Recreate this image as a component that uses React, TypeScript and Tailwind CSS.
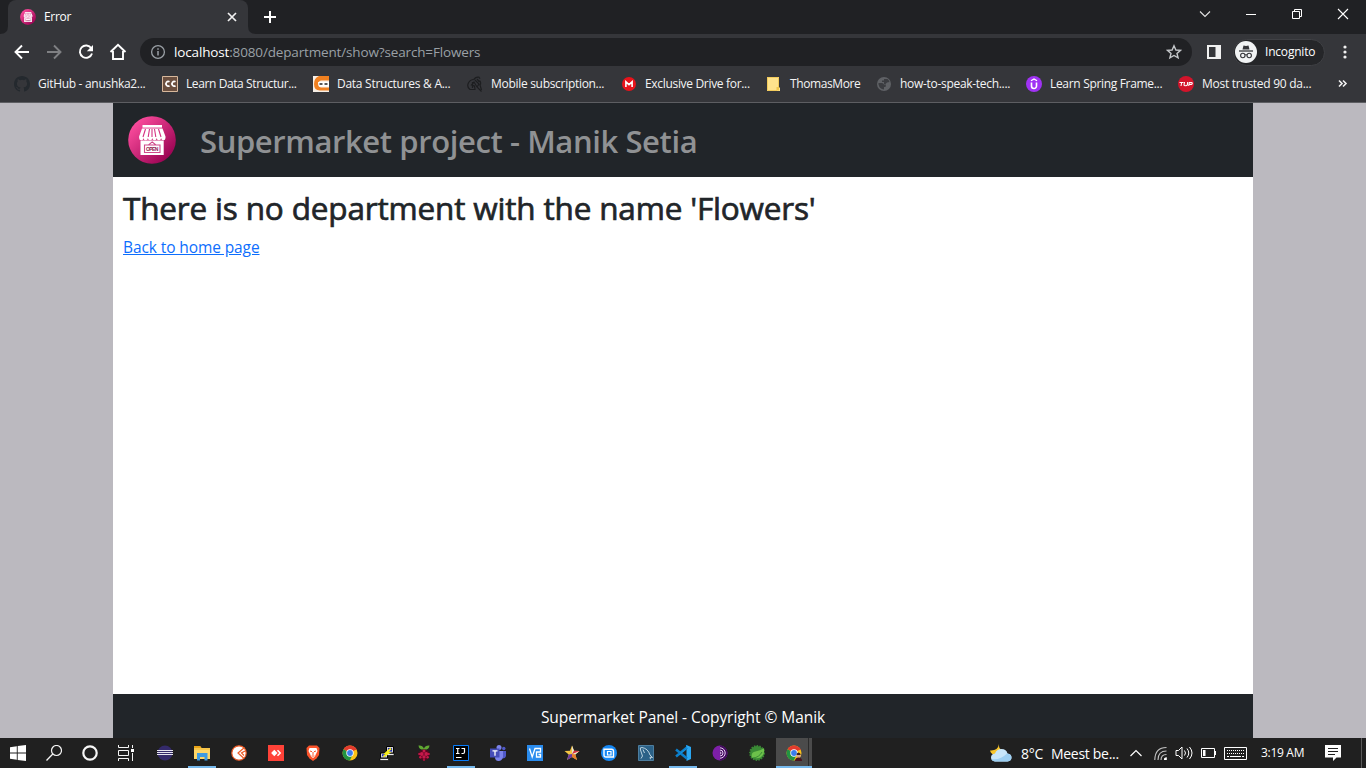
import React from "react";

const UI = "font-['Open_Sans','Noto_Sans',sans-serif]";

function StoreLogo({ className }: { className: string }) {
  return (
    <svg viewBox="0 0 48 48" className={className}>
      <defs>
        <linearGradient id="store" x1="0.1" y1="0.1" x2="0.9" y2="0.9">
          <stop offset="0" stopColor="#ff4fa0" />
          <stop offset="1" stopColor="#96004f" />
        </linearGradient>
      </defs>
      <circle cx="24" cy="24" r="23.8" fill="url(#store)" />
      <path d="M14.5 9h19.500v2.600h-19.500z" fill="#fff" />
      <path d="M14 12.500h20.500l3 8v1.500a2.200 2.200 0 0 1-4.400 0 2.200 2.200 0 0 1-4.400 0 2.200 2.200 0 0 1-4.400 0 2.200 2.200 0 0 1-4.400 0 2.200 2.200 0 0 1-4.400 0 2.200 2.200 0 0 1-4.400 0v-1.500z" fill="#fff" />
      <path d="M17.500 13l-2.500 8M21.500 13l-1.300 8M26.500 13l1.300 8M30.500 13l2.500 8M24 13v8" stroke="#d43283" strokeWidth="1.100" />
      <path d="M12.500 24.500h23.200v14.500h-23.200z" fill="#fff" />
      <path d="M20.500 29l3.700-3.100 3.700 3.100M16.500 29h15.500v7.500h-15.500z" fill="none" stroke="#d04a8c" strokeWidth="1.100" />
      <text x="24.200" y="34.800" fontSize="5" fontWeight="700" textAnchor="middle" fill="#8d174f" fontFamily="Liberation Sans" textLength="12.500">OPEN</text>
    </svg>
  );
}

function S({ children, w = 16, h = 16, className = "" }: { children: React.ReactNode; w?: number; h?: number; className?: string }) {
  return (
    <svg width={w} height={h} viewBox={`0 0 ${w} ${h}`} fill="none" className={`shrink-0 ${className}`}>
      {children}
    </svg>
  );
}

const bookmarks: { label: string; cls: string; icon: React.ReactNode }[] = [
  {
    label: "GitHub - anushka2...",
    cls: "w-[108px] tracking-[-0.3px]",
    icon: <path fill="#24292e" d="M8 0C3.580 0 0 3.580 0 8c0 3.540 2.290 6.530 5.470 7.590.4.070.55-.17.55-.38 0-.19-.01-.82-.01-1.490-2.010.37-2.530-.49-2.690-.94-.09-.23-.48-.94-.82-1.130-.28-.15-.68-.52-.01-.53.63-.01 1.080.58 1.230.82.72 1.210 1.870.87 2.330.66.07-.52.28-.87.51-1.070-1.780-.2-3.640-.89-3.640-3.950 0-.87.31-1.590.82-2.150-.08-.2-.36-1.020.08-2.120 0 0 .67-.21 2.200.82a7.600 7.600 0 0 1 4 0c1.530-1.040 2.200-.82 2.200-.82.44 1.100.16 1.920.08 2.120.51.56.82 1.270.82 2.150 0 3.070-1.870 3.750-3.650 3.950.29.25.54.73.54 1.480 0 1.070-.01 1.930-.01 2.200 0 .21.15.46.55.38A8.010 8.010 0 0 0 16 8c0-4.420-3.580-8-8-8z" />,
  },
  {
    label: "Learn Data Structur...",
    cls: "w-[111px] tracking-[-0.4px]",
    icon: (
      <>
        <path d="M.5.5h15v15H.5z" fill="#6b4f3f" stroke="#d8b89c" />
        <path d="M7.500 5.800A2.300 2.300 0 1 0 7.500 9.700M13.500 5.800A2.300 2.300 0 1 0 13.500 9.700" stroke="#fff" strokeWidth="1.800" />
      </>
    ),
  },
  {
    label: "Data Structures & A...",
    cls: "w-[114px] tracking-[-0.27px]",
    icon: (
      <>
        <path d="M0 0h16v16H0z" fill="#f7efe6" />
        <path d="M16 0v4.500H8Q5.200 5 5.200 8T8 11.500h8v3H7Q1 14.500 1 8q0-6 5-8z" fill="#f08020" />
        <path d="M5 6h11v4.500H6z" fill="#fff" />
        <path d="M6.500 8h3M11.500 8h3" stroke="#222" strokeWidth="1.500" />
      </>
    ),
  },
  {
    label: "Mobile subscription...",
    cls: "w-[114px] tracking-[-0.3px]",
    icon: (
      <path
        d="M6.500 4Q8.500.5 12 1.200l1 1.600M12.500 4.500q2 2 .5 4.500l1.500 5M6 3.500Q2 4.500 1 8t2 5.500h5l-.5-3.500L4.500 9l2.500-3 3 5 4.500 4.500M8 4l4 4-2 3M5.500 6v6M10 3l2.500 3"
        stroke="#1d1e20"
        strokeWidth="1.200"
      />
    ),
  },
  {
    label: "Exclusive Drive for...",
    cls: "w-[105px] tracking-[-0.32px]",
    icon: (
      <>
        <circle cx="8" cy="8" r="7" fill="#e8131b" />
        <path d="M4.900 11V5.800L8 8.700l3.100-2.900V11" stroke="#fff" strokeWidth="1.600" />
      </>
    ),
  },
  {
    label: "ThomasMore",
    cls: "w-[70px] tracking-[-0.4px]",
    icon: (
      <>
        <path d="M1 1h12v10.500h1V15H1z" fill="#ffe38c" />
        <path d="M1.500 1v13.500H11M1 1.500h11.500V11" stroke="#f2cb5c" />
        <path d="M10.500 11h2.500v3.500h-2.500z" fill="#f0c64b" />
      </>
    ),
  },
  {
    label: "how-to-speak-tech....",
    cls: "w-[110px] tracking-[-0.3px]",
    icon: (
      <>
        <circle cx="8" cy="8" r="7" fill="#5f6165" />
        <path d="M2.500 7H6q1.500 0 2 1.500h2l-.5 2.500H8v2.500Q3.500 13 2.500 8.500zM8 3h3.500q1.500 1 2 3L11 6.500 9.500 8H8V6H6V4.500h2z" fill="#3b3c40" />
      </>
    ),
  },
  {
    label: "Learn Spring Frame...",
    cls: "w-[112px] tracking-[-0.32px]",
    icon: (
      <>
        <circle cx="8" cy="8" r="8" fill="#a032f4" />
        <path d="M5.500 6.500v3.500a2.500 2.500 0 0 0 5 0V6.500" stroke="#fff" strokeWidth="1.600" />
        <path d="M5 4.800L8 3l3 1.800" stroke="#fff" strokeWidth="1.300" />
      </>
    ),
  },
  {
    label: "Most trusted 90 da...",
    cls: "w-[110px] tracking-[-0.28px]",
    icon: (
      <>
        <circle cx="8" cy="8" r="8" fill="#d3142b" />
        <path d="M1.500 6.500h4M3.700 6.500l-.7 3.500M6.500 6l-.5 3q0 .8 1.500.8t1.800-.8l.4-3M10.700 10l.6-3.500h2.200q1 0 .7 1t-1.200.9h-1.800" stroke="#fff" strokeWidth="1.100" />
      </>
    ),
  },
];

function ChromeMark() {
  return (
    <g>
      <circle cx="8" cy="8" r="7.500" fill="#fbc116" />
      <path d="M1.500 4.250A7.500 7.500 0 0 1 14.500 4.250L8 8z" fill="#e33b2e" />
      <path d="M1.500 4.250A7.500 7.500 0 0 0 7.800 15.500L10.500 10 8 8z" fill="#229342" />
      <path d="M8 4.300h6.600" stroke="#e33b2e" strokeWidth="1" />
      <circle cx="8" cy="8" r="3.700" fill="#fff" />
      <circle cx="8" cy="8" r="2.900" fill="#3b7ded" />
    </g>
  );
}

const apps: { name: string; open?: boolean; icon: React.ReactNode }[] = [
  {
    name: "eclipse",
    icon: (
      <>
        <circle cx="8" cy="8" r="7.500" fill="#342a6b" />
        <path d="M0 5.500h16M0 7.500h16M0 9.500h16" stroke="#e6e4ef" strokeWidth="1" />
      </>
    ),
  },
  {
    name: "explorer",
    open: true,
    icon: (
      <>
        <path d="M0 1h6l1.500 2H16v11H0z" fill="#f8c64a" />
        <path d="M0 1h6l1.500 2H0z" fill="#e8a317" />
        <path d="M0 5h16v9H0z" fill="#ffd766" />
        <path d="M3 15.500V8h10.500v7.500h-3V12H6v3.500z" fill="#3f9be0" />
      </>
    ),
  },
  {
    name: "postman",
    icon: (
      <>
        <circle cx="8" cy="8" r="7.200" fill="#fff" stroke="#ef5b25" strokeWidth="1.200" />
        <path d="M13.500 2.500L7 8l6 5.500M14 6l-3.500 2 2.500 2.500" stroke="#ef5b25" strokeWidth="1.200" />
      </>
    ),
  },
  {
    name: "anydesk",
    icon: (
      <>
        <path d="M0 0h16v16H0z" fill="#ff4238" />
        <path d="M6.300 4.800L9.500 8l-3.200 3.200L3.100 8z" fill="#fff" />
        <path d="M9.500 5.300L12.200 8l-2.700 2.700" stroke="#fff" strokeWidth="1.500" />
      </>
    ),
  },
  {
    name: "brave",
    icon: (
      <>
        <path d="M4 .5h8L14.500 3 14 10l-2.500 3.500L8 16l-3.500-2.500L2 10 1.500 3z" fill="#fb542b" />
        <path d="M4.500 3h7l1 3-2 4-.5 1.500L8 13l-2-1.500L5.500 10l-2-4z" fill="#fff" />
        <path d="M5 6l2 .7M11 6l-2 .7M8 7v3M6.500 11h3" stroke="#fb542b" />
      </>
    ),
  },
  { name: "chrome", icon: <ChromeMark /> },
  {
    name: "putty",
    icon: (
      <>
        <path d="M7.500 1.500h7v6.500h-7zM1.500 8h7v5h-7z" fill="#d4d4d4" stroke="#000" />
        <path d="M9 3h4v3.500H9zM3 9.300h4v2H3z" fill="#1b2bc0" />
        <path d="M7.500 8.500H15v2H9M1 13.500h8.500v2H1z" fill="#eee" stroke="#000" strokeWidth=".6" />
        <path d="M12 3.500L7 8h2.500L4.500 11.500" stroke="#f7ee1b" strokeWidth="1.900" />
      </>
    ),
  },
  {
    name: "raspberry",
    icon: (
      <>
        <path d="M2.500.5Q6.500 0 7.900 3.500 9.500 0 13.500.5 13 5 8 4.800 3 5 2.500.5z" fill="#5fa832" />
        <path d="M8 4.500q4 0 5.500 3.500.5 4-2.500 6.500-3 2-6 0Q2 12 2.500 8 4 4.500 8 4.500z" fill="#58061f" />
        <g fill="#c7194b">
          <circle cx="8" cy="6.100" r="1.500" />
          <circle cx="5.800" cy="9" r="1.900" />
          <circle cx="10.200" cy="9" r="1.900" />
          <circle cx="8" cy="12" r="1.700" />
          <circle cx="3.200" cy="9" r="1" />
          <circle cx="12.800" cy="9" r="1" />
          <circle cx="4.400" cy="12.300" r="1.200" />
          <circle cx="11.600" cy="12.300" r="1.200" />
          <circle cx="8" cy="14.900" r=".9" />
        </g>
      </>
    ),
  },
  {
    name: "intellij",
    open: true,
    icon: (
      <>
        <path d="M.5.5h15v15H.5z" fill="#000" stroke="#087cfa" />
        <path d="M3 3.500h3.500M4.750 3.500v5M3 8.500h3.500M8.500 3.500h3v3.500q0 1.500-1.500 1.500H8.500M3 12.500h5.500" stroke="#fff" strokeWidth="1.200" />
      </>
    ),
  },
  {
    name: "teams",
    icon: (
      <>
        <circle cx="9" cy="2.500" r="2.500" fill="#7b83eb" />
        <circle cx="13.800" cy="3.500" r="1.700" fill="#5059c9" />
        <path d="M11 6h5v5q-.5 2.500-4 2.500z" fill="#5059c9" />
        <path d="M5 6h8v6q-1 4-4.500 4T5 12z" fill="#7b83eb" />
        <path d="M0 3.500h9.500v9H0z" fill="#464eb8" />
        <path d="M2.500 5.800h5M5 5.800v5" stroke="#fff" strokeWidth="1.300" />
      </>
    ),
  },
  {
    name: "vnc",
    icon: (
      <>
        <path d="M0 0h16v16H0z" fill="#2a8cee" />
        <path d="M2.500 3.500l2.700 8.500L8 3.500h5.500v3.500h-4v5h4V9.500h-2" stroke="#fff" strokeWidth="1.300" />
      </>
    ),
  },
  {
    name: "star",
    icon: (
      <>
        <path d="M8 .5l2 5.200 5.500.3-4.200 3.600L13 15l-5-3-5 3 1.700-5.400L.5 6 6 5.700z" fill="#f4c542" />
        <path d="M8 .5l2 5.200L8 9zM15.500 6l-4.200 3.600L8 9z" fill="#e9e2d5" />
        <path d="M10 5.700l5.500.3L8 9z" fill="#d42d4c" />
        <path d="M3 15l1.700-5.400L8 9v3z" fill="#6a3ba5" />
        <path d="M13 15l-1.700-5.400L8 9v3z" fill="#e77e2d" />
      </>
    ),
  },
  {
    name: "remote",
    icon: (
      <>
        <circle cx="8" cy="8" r="8" fill="#1688f5" />
        <path d="M3 4.200h7.500q2 0 2 2V12H5q-2 0-2-2z" stroke="#fff" strokeWidth="1.400" />
        <path d="M6.500 6.500h3.500v3.500H6.500z" stroke="#fff" strokeWidth="1.200" />
      </>
    ),
  },
  {
    name: "mysql",
    icon: (
      <>
        <path d="M.5.5h15v15H.5z" fill="#2b6187" stroke="#4d7d9e" />
        <path d="M3 13.500L4.500 11 2.500 5Q1.500 2 4 2.500q6 1 8 7.500l2.500 2.500-2.500-.3.500 2M5 4.500l1.500 3.500" stroke="#c8dce8" strokeWidth=".9" />
      </>
    ),
  },
  {
    name: "vscode",
    open: true,
    icon: (
      <>
        <path d="M11.500 0L16 2v12l-4.500 2z" fill="#2aa7f2" />
        <path d="M12 2.500L1 11.500M1 4.500l11 9" stroke="#0c7fcb" strokeWidth="2.600" />
        <path d="M11.500 0v3.500L4 9.500" stroke="#1590dc" strokeWidth="1" />
      </>
    ),
  },
  {
    name: "tor",
    icon: (
      <>
        <circle cx="8" cy="8" r="7.500" fill="#7d1fa8" />
        <path d="M8 .5a7.500 7.500 0 0 1 0 15z" fill="#420c5d" />
        <path d="M8 2.800a5.200 5.200 0 0 1 0 10.400M8 5a3 3 0 0 1 0 6M8 7a1 1 0 0 1 0 2" stroke="#e6cdf2" strokeWidth="1" />
      </>
    ),
  },
  {
    name: "spring",
    icon: (
      <>
        <circle cx="8" cy="8" r="7" fill="#3a8a35" stroke="#3a8a35" strokeDasharray="1.500 1.200" strokeWidth="1.800" />
        <path d="M15 3Q16 10 11.500 12.500 8 14 3 12.500 1.500 7.500 6.500 6.500q5-.5 8.500-3.500z" fill="#6cc04a" />
        <path d="M4 13q6-.5 9-6" stroke="#3a8a35" />
      </>
    ),
  },
];

function TabStrip() {
  return (
    <div className="flex h-[34px] bg-[#202124]">
      <S w={8} h={34}>
        <path d="M0 34h8v-8q0 8-8 8z" fill="#35363a" />
      </S>
      <div className="flex h-[34px] w-60 items-center rounded-t-lg bg-[#35363a] pl-3 pr-[10px]">
        <StoreLogo className="h-4 w-4 shrink-0" />
        <span className="ml-2 w-[180px] text-[12px] tracking-[-0.3px] text-white">Error</span>
        <S w={12} h={12} className="ml-auto">
          <path d="M2 2l8 8M10 2l-8 8" stroke="#f1f1f1" strokeWidth="1.700" />
        </S>
      </div>
      <S w={8} h={34}>
        <path d="M8 34H0v-8q0 8 8 8z" fill="#35363a" />
      </S>
      <S w={12} h={12} className="ml-2 mt-[11px]">
        <path d="M6 0v12M0 6h12" stroke="#fff" strokeWidth="2" />
      </S>
      <div className="ml-auto flex h-7 items-center gap-[34px] pr-[17px]">
        <S w={12} h={12}>
          <path d="M1 3.500l5 5 5-5" stroke="#e4e4e4" strokeWidth="1.100" />
        </S>
        <S w={12} h={12}>
          <path d="M1 6.500h10" stroke="#fff" />
        </S>
        <S w={12} h={12}>
          <path d="M1.500 3.500h7v7h-7zM3.500 3.500v-2h7v7h-2" stroke="#fff" />
        </S>
        <S w={12} h={12}>
          <path d="M1 1l10 10M11 1L1 11" stroke="#fff" strokeWidth="1.100" />
        </S>
      </div>
    </div>
  );
}

function Toolbar() {
  return (
    <div className="flex h-9 items-center bg-[#35363a] pl-[14px]">
      <S>
        <path d="M15 8H2M8 1.500L1.500 8 8 14.500" stroke="#fff" strokeWidth="1.900" />
      </S>
      <S className="ml-4">
        <path d="M1 8h13M8 1.500L14.500 8 8 14.500" stroke="#7f8083" strokeWidth="1.900" />
      </S>
      <S className="ml-4">
        <path d="M13.300 4.300A6.200 6.200 0 1 0 14 9.500" stroke="#fff" strokeWidth="1.900" />
        <path d="M15 1v6.200H8.800z" fill="#fff" />
      </S>
      <S w={18} h={18} className="ml-[15px]">
        <path d="M1.500 9L9 1.800 16.500 9M4 8v8h10V8" stroke="#fff" strokeWidth="1.900" />
      </S>
      <div className="ml-[13px] flex h-7 w-[1052px] items-center rounded-full bg-[#202124] pl-[10px] pr-[10px]">
        <S>
          <circle cx="8" cy="8" r="6.400" stroke="#9aa0a6" strokeWidth="1.300" />
          <path d="M8 7v4.500M8 4.300v1.500" stroke="#9aa0a6" strokeWidth="1.500" />
        </S>
        <span className="ml-2 whitespace-nowrap pb-px text-[13.5px] leading-5 tracking-[-0.15px] text-[#9aa0a6]">
          <span className="text-white">localhost</span>:8080/department/show?search=Flowers
        </span>
        <S className="ml-auto">
          <path d="M8 1.800l1.900 4.200 4.600.4-3.500 3 1.100 4.500L8 11.500l-4.100 2.400L5 9.400l-3.500-3 4.600-.4z" stroke="#c4c7ca" strokeWidth="1.400" />
        </S>
      </div>
      <S w={14} h={14} className="ml-[15px]">
        <path d="M0 0h14v14H0z" fill="#f1f1f1" />
        <path d="M2 2h6.500v10H2z" fill="#35363a" />
      </S>
      <div className="ml-[12px] flex h-[27px] w-[92px] items-center rounded-full border border-[#404145] bg-[#252629]">
        <S w={22} h={22} className="ml-px">
          <circle cx="11" cy="11" r="11" fill="#f1f3f4" />
          <path d="M7.500 8.500L8.500 4.500l2.500.6 2.500-.6 1 4z" fill="#35363a" />
          <path d="M4 10h14" stroke="#35363a" strokeWidth="1.300" />
          <circle cx="7.800" cy="14.500" r="2.200" stroke="#35363a" strokeWidth="1.100" />
          <circle cx="14.200" cy="14.500" r="2.200" stroke="#35363a" strokeWidth="1.100" />
          <path d="M10 14q1-.7 2 0" stroke="#35363a" />
        </S>
        <span className="ml-2 whitespace-nowrap text-[12px] tracking-[-0.2px] text-white">Incognito</span>
      </div>
      <S w={4} h={14} className="ml-[18px]">
        <circle cx="2" cy="2" r="1.600" fill="#f1f1f1" />
        <circle cx="2" cy="7" r="1.600" fill="#f1f1f1" />
        <circle cx="2" cy="12" r="1.600" fill="#f1f1f1" />
      </S>
    </div>
  );
}

function Bookmarks() {
  return (
    <div className="flex h-[33px] items-center gap-4 border-b border-[#5d5e62] bg-[#35363a] pb-[5px] pl-[14px]">
      {bookmarks.map((b) => (
        <div key={b.label} className="flex shrink-0 items-center gap-2">
          <S>{b.icon}</S>
          <span className={`whitespace-nowrap text-[12px] leading-4 text-[#f4f4f5] ${b.cls}`}>{b.label}</span>
        </div>
      ))}
      <S w={10} h={10} className="ml-[10px]">
        <path d="M1 1.500l3 3-3 3M5 1.500l3 3-3 3" stroke="#f1f1f1" strokeWidth="1.600" />
      </S>
    </div>
  );
}

function Page() {
  return (
    <div className="flex h-[635px] justify-center bg-[#bbb9bf]">
      <div className="flex w-[1140px] flex-col bg-white">
        <header className="flex h-[74px] items-center bg-[#212529] pl-[15px]">
          <StoreLogo className="h-12 w-12" />
          <h2 className="ml-6 mt-0.5 whitespace-nowrap text-[31px] font-semibold leading-[38px] tracking-[-0.4px] text-[#909294]">
            Supermarket project - Manik Setia
          </h2>
        </header>
        <main className="flex-1 pl-[10px] pt-3">
          <h2 className="whitespace-nowrap text-[31.5px] font-normal leading-[38px] tracking-[-0.17px] text-[#212529] [-webkit-text-stroke:0.7px_#212529]">
            There is no department with the name 'Flowers'
          </h2>
          <a href="#" className="mt-2 block w-fit whitespace-nowrap text-[15.5px] leading-6 tracking-[-0.1px] text-[#0d6efd] underline">
            Back to home page
          </a>
        </main>
        <footer className="flex h-11 items-center justify-center bg-[#212529] pt-[2px]">
          <span className="whitespace-nowrap text-[15.5px] leading-6 tracking-[-0.06px] text-white">Supermarket Panel - Copyright © Manik</span>
        </footer>
      </div>
    </div>
  );
}

function Cell({ children }: { children: React.ReactNode }) {
  return <div className="flex h-[30px] w-9 shrink-0 items-center justify-center">{children}</div>;
}

function Taskbar() {
  return (
    <div className="flex h-[30px] bg-[#202020]">
      <Cell>
        <S>
          <path d="M0 2.200l6.800-1v6.300H0zM7.700 1L16 0v7.500H7.700zM0 8.500h6.800v6.300L0 13.800zM7.700 8.500H16V16l-8.300-1z" fill="#fff" />
        </S>
      </Cell>
      <Cell>
        <S>
          <circle cx="10.500" cy="5.500" r="5" stroke="#f4f4f4" strokeWidth="1.200" />
          <path d="M6.800 9L.5 15.500" stroke="#f4f4f4" strokeWidth="1.300" />
        </S>
      </Cell>
      <Cell>
        <S>
          <circle cx="8" cy="8" r="6.700" stroke="#f6f6f6" strokeWidth="2.200" />
        </S>
      </Cell>
      <Cell>
        <S>
          <path d="M.5 0v2.500h10V0M.5 5.500h10v5h-10zM.5 16v-2.500h10V16M14.500 0v3M14.500 8v8" stroke="#f4f4f4" strokeWidth="1" />
          <path d="M13 4h3v3h-3z" fill="#fff" />
        </S>
      </Cell>
      <div className="ml-[2px] flex">
        {apps.map((a) => (
          <div key={a.name} className="flex h-[30px] w-[37px] flex-col items-center">
            <div className="flex h-7 items-center pt-[2px]">
              <S>{a.icon}</S>
            </div>
            {a.open && <div className="h-[2px] w-7 bg-[#76b9ed]" />}
          </div>
        ))}
      </div>
      <div className="ml-px flex h-[30px] w-9 border-b-2 border-[#76b9ed] bg-[#4b4b4b]">
        <div className="flex w-[33px] items-center justify-center border-r border-[#2b2b2b] pl-[4px] pt-[2px]">
          <S>
            <ChromeMark />
            <circle cx="12.500" cy="10.500" r="2.200" fill="#d9a58a" />
            <path d="M9 16q0-3.500 3.500-3.500T16 16z" fill="#4a1420" />
            <path d="M10.500 10q0-2.500 2-2.500t2.200 2.500z" fill="#38251f" />
          </S>
        </div>
      </div>
      <div className="ml-[178px] flex h-[30px] items-center">
        <S w={22} h={20}>
          <path d="M9 1q-.5 4 2 5.500t3 .5Q13 12 7 12T0 7.500q8 .5 9-6.500z" fill="#f8c52c" />
          <path d="M5 18.500q-4-.5-4-4t4-4Q6.500 6 11.500 6t6 4.500q4 .5 4 4t-4 4z" fill="#c8e6fa" />
          <path d="M5 18.500q-3-.5-3.500-2.500Q10 17.500 17 10.500q4.500.5 4.500 4t-4 4z" fill="#9dcff2" />
        </S>
        <span className="ml-[9px] w-[30px] whitespace-nowrap text-[14px] tracking-[-0.3px] text-white">8°C</span>
        <span className="w-[79px] whitespace-nowrap text-[14px] tracking-[-0.3px] text-white">Meest be...</span>
        <S w={12} h={12}>
          <path d="M.5 9L6 3.500 11.500 9" stroke="#fff" strokeWidth="1.200" />
        </S>
        <S w={14} h={14} className="ml-[12px]">
          <path d="M.8 14Q1 1.500 12.500 1.500M4 14Q4 5 12.500 5M7 14q0-5.500 5.500-5.500" stroke="#c4c4c4" strokeWidth="1.100" />
          <path d="M10 14q-.5-2.500 2.800-2.700V14z" fill="#fff" />
        </S>
        <S w={18} h={16} className="ml-[7px]">
          <path d="M1 5.500h2.500L7 2v12l-3.500-3.500H1z" stroke="#fff" />
          <path d="M9.500 5.500q2 2.500 0 5M12 3.500q3.500 4.500 0 9M14.500 2q5 6 0 12" stroke="#fff" />
        </S>
        <S w={15} h={10} className="ml-[8px]">
          <path d="M.5.5h13v9H.500zM14.500 3v4" stroke="#fff" />
          <path d="M2 2h2.500v6H2z" fill="#fff" />
        </S>
        <S w={23} h={13} className="ml-[8px]">
          <path d="M.5.5h22v12H.5z" stroke="#fff" />
          <path d="M3 3.500h17M3 6.500h17" stroke="#fff" strokeDasharray="1 1" />
          <path d="M3 9.500h2M6 9.500h11M18 9.500h2" stroke="#fff" />
        </S>
        <span className="ml-[14px] w-[64px] whitespace-nowrap text-[12px] tracking-[-0.3px] text-white">3:19 AM</span>
        <S w={16} h={16}>
          <path d="M0 0h16v12.500h-4.500L8 16v-3.500H0z" fill="#fff" />
          <path d="M3 3.500h10M3 6.500h10M3 9.500h7" stroke="#202020" strokeWidth="1.100" />
        </S>
      </div>
      <div className="ml-auto mr-[4px] h-[30px] w-px bg-[#5a5a5a]" />
    </div>
  );
}

export default function App() {
  return (
    <div className={`flex h-[768px] w-[1366px] flex-col overflow-hidden ${UI}`}>
      <TabStrip />
      <Toolbar />
      <Bookmarks />
      <Page />
      <Taskbar />
    </div>
  );
}
